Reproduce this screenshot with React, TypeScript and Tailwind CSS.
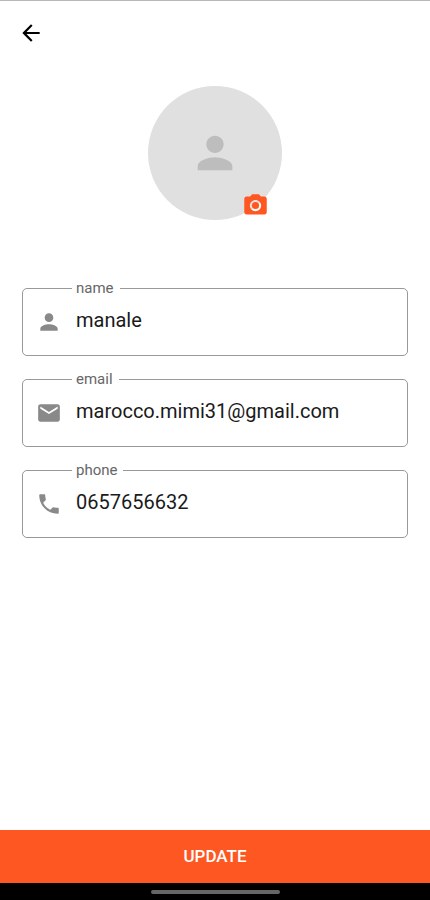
import { useState } from 'react';
import type { IconType } from 'react-icons';
import { MdArrowBack, MdEmail, MdPerson, MdPhone, MdPhotoCamera } from 'react-icons/md';

type FieldProps = {
  id: string;
  type: string;
  icon: IconType;
  value: string;
  onChange: (value: string) => void;
};

function Field({ id, type, icon: Icon, value, onChange }: FieldProps) {
  return (
    <div className="relative flex h-[68px] items-center rounded-[5px] border border-[#999999] pl-[13px]">
      <label
        htmlFor={id}
        className="absolute -top-3 left-[49px] bg-white pl-1 pr-1.5 text-[15px] leading-[22px] text-[#666666]"
      >
        {id}
      </label>
      <Icon className="size-[26px] shrink-0 text-[#898989]" />
      <input
        id={id}
        type={type}
        value={value}
        onChange={(e) => onChange(e.target.value)}
        className="ml-3.5 mb-1 min-w-0 flex-1 bg-transparent text-xl text-[#1a1a1a] outline-none"
      />
    </div>
  );
}

export default function App() {
  const [name, setName] = useState('manale');
  const [email, setEmail] = useState('marocco.mimi31@gmail.com');
  const [phone, setPhone] = useState('0657656632');

  return (
    <div className="flex min-h-screen flex-col border-t border-[#b8b8b8] bg-white font-[Roboto,sans-serif]">
      <header className="px-[18px] pt-[19px]">
        <button type="button" aria-label="Back" className="block cursor-pointer">
          <MdArrowBack className="size-[26px] text-black" />
        </button>
      </header>

      <main className="flex flex-1 flex-col">
        {/* Avatar */}
        <div className="relative mx-auto mt-10 flex size-[134px] items-center justify-center rounded-full bg-[#e0e0e0]">
          <MdPerson className="size-[52px] text-[#bdbdbd]" />
          <button
            type="button"
            aria-label="Change photo"
            className="absolute bottom-px right-[13px] cursor-pointer"
          >
            <MdPhotoCamera className="size-[27px] text-[#ff5722]" />
          </button>
        </div>

        <form id="profile" className="mt-[68px] flex flex-col gap-[23px] px-[22px]" onSubmit={(e) => e.preventDefault()}>
          <Field id="name" type="text" icon={MdPerson} value={name} onChange={setName} />
          <Field id="email" type="email" icon={MdEmail} value={email} onChange={setEmail} />
          <Field id="phone" type="tel" icon={MdPhone} value={phone} onChange={setPhone} />
        </form>
      </main>

      <button
        type="submit"
        form="profile"
        className="h-[53px] w-full cursor-pointer bg-[#ff5722] text-[17px] font-medium text-white"
      >
        UPDATE
      </button>

      {/* Gesture bar */}
      <div className="flex h-[17px] items-center justify-center bg-black">
        <div className="h-1 w-[30%] rounded-full bg-[#666666]" />
      </div>
    </div>
  );
}
